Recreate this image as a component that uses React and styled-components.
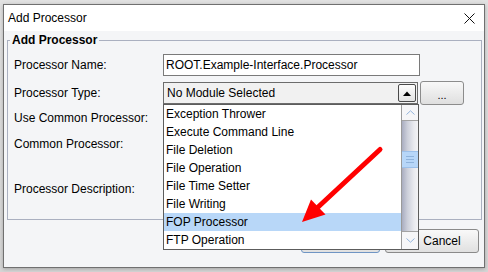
import React from "react";
import styled, { createGlobalStyle } from "styled-components";

const GlobalStyle = createGlobalStyle`
  html, body { margin: 0; padding: 0; }
  body {
    width: 488px;
    height: 272px;
    overflow: hidden;
    background: #dadada;
    font-family: "Liberation Sans", Arial, sans-serif;
    font-size: 12px;
    color: #000;
  }
`;

const Stage = styled.div`
  position: relative;
  width: 488px;
  height: 272px;
  box-sizing: border-box;
  padding: 4px 0 0 3px;
  background: linear-gradient(#e2e2e2, #d6d6d6);
`;

const Window = styled.div`
  width: 482px;
  height: 264px;
  box-sizing: border-box;
  border: 1px solid #707070;
  background: #f4f5f7;
  display: flex;
  flex-direction: column;
  box-shadow: 0 1px 4px rgba(0, 0, 0, 0.25);
`;

const TitleBar = styled.div`
  height: 26px;
  flex: none;
  background: #fff;
  display: flex;
  align-items: center;
  justify-content: space-between;
  padding: 0 9px 0 4px;
`;

const TitleText = styled.span`
  font-size: 12px;
  line-height: 14px;
`;

const Body = styled.div`
  flex: 1;
  display: flex;
  flex-direction: column;
  padding: 2px 2px 0 3px;
`;

const Group = styled.fieldset`
  margin: 0;
  padding: 7px 6px 0 6px;
  border: 1px solid #aab0c0;
  height: 187px;
  box-sizing: border-box;
  min-width: 0;
`;

const Legend = styled.legend`
  font-weight: bold;
  font-size: 12px;
  line-height: 14px;
  padding: 0 2px;
  margin-left: -4px;
`;

const Rows = styled.div`
  display: flex;
  flex-direction: column;
`;

const Row = styled.div`
  display: flex;
  align-items: ${(p) => p.$align || "center"};
  height: ${(p) => p.$h}px;
  margin-top: ${(p) => p.$mt || 0}px;
`;

const Label = styled.span`
  width: 149px;
  flex: none;
  line-height: 14px;
  padding-top: ${(p) => p.$pt || 0}px;
`;

const TextField = styled.input`
  width: 257px;
  height: 22px;
  box-sizing: border-box;
  border: 1px solid #7a7a7a;
  background: #fff;
  padding: 0 0 0 2px;
  margin: 0;
  font-family: inherit;
  font-size: 12px;
  color: #000;
  outline: none;
`;

const Combo = styled.div`
  position: relative;
  width: 255px;
  height: 22px;
  box-sizing: border-box;
  border: 1px solid #6c6c6c;
  background: #f1f1f1;
  display: flex;
  align-items: center;
  padding-left: 3px;
  z-index: 5;
`;

const ComboText = styled.span`
  flex: 1;
  line-height: 14px;
`;

const ArrowButton = styled.div`
  width: 18px;
  height: 18px;
  box-sizing: border-box;
  border: 1px solid #4a4a4a;
  border-radius: 2px;
  background: linear-gradient(#fdfdfd, #e3e3e3);
  margin-right: 1px;
  display: flex;
  align-items: center;
  justify-content: center;
`;

const SmallButton = styled.div`
  width: 44px;
  height: 24px;
  box-sizing: border-box;
  margin-left: 2px;
  border: 1px solid #8c8c8c;
  border-radius: 3px;
  background: linear-gradient(#f8f8f8, #dfdfdf);
  display: flex;
  align-items: center;
  justify-content: center;
  font-size: 11px;
  line-height: 12px;
  padding-top: 3px;
`;

const DropList = styled.div`
  position: absolute;
  top: calc(100% + 1px);
  left: -1px;
  width: 256px;
  box-sizing: border-box;
  border: 1px solid #5c5c5c;
  background: #fff;
  display: flex;
`;

const Items = styled.div`
  flex: 1;
  display: flex;
  flex-direction: column;
`;

const Item = styled.div`
  height: 18px;
  line-height: 18px;
  padding-left: 2px;
  background: ${(p) => (p.$selected ? "#b8d7f8" : "transparent")};
  white-space: nowrap;
`;

const ScrollBar = styled.div`
  width: 17px;
  flex: none;
  display: flex;
  flex-direction: column;
  border-left: 1px solid #9a9a9a;
  box-sizing: border-box;
`;

const ScrollBtn = styled.div`
  height: ${(p) => p.$h}px;
  flex: none;
  box-sizing: border-box;
  background: #f6f6f8;
  border-${(p) => p.$edge}: 1px solid #a3a3a3;
  display: flex;
  align-items: center;
  justify-content: center;
`;

const Track = styled.div`
  flex: 1;
  display: flex;
  flex-direction: column;
  padding-top: 30px;
  background: linear-gradient(90deg, #a9adc0 0%, #cdd0db 35%, #e9eaef 75%, #f3f3f5 100%);
`;

const Thumb = styled.div`
  height: 17px;
  box-sizing: border-box;
  background: #b7d6f8;
  border-top: 1px solid #9cc0ea;
  border-bottom: 1px solid #9cc0ea;
  display: flex;
  flex-direction: column;
  align-items: center;
  justify-content: center;
  gap: 2px;
`;

const Grip = styled.div`
  width: 8px;
  height: 1px;
  background: #8fb3dc;
`;

const OtherField = styled.div`
  width: 200px;
  height: ${(p) => p.$h}px;
  box-sizing: border-box;
  border: 1px solid #7a7a7a;
  background: #fff;
`;

const ButtonRow = styled.div`
  margin-top: 9px;
  padding-right: 3px;
  display: flex;
  justify-content: flex-end;
  gap: 5px;
`;

const Button = styled.div`
  width: ${(p) => p.$w}px;
  height: 24px;
  box-sizing: border-box;
  border: 1px solid ${(p) => (p.$default ? "#6f95c4" : "#8a8a8a")};
  border-radius: 3px;
  background: linear-gradient(#f9f9f9, #e0e0e0);
  display: flex;
  align-items: center;
  justify-content: center;
  gap: 4px;
  font-size: 12px;
  line-height: 14px;
`;

const Overlay = styled.svg`
  position: absolute;
  left: 0;
  top: 0;
  width: 488px;
  height: 272px;
  pointer-events: none;
  z-index: 20;
`;

const items = [
  "Exception Thrower",
  "Execute Command Line",
  "File Deletion",
  "File Operation",
  "File Time Setter",
  "File Writing",
  "FOP Processor",
  "FTP Operation",
];

export default function App() {
  return (
    <>
      <GlobalStyle />
      <Stage>
        <Window>
          <TitleBar>
            <TitleText>Add Processor</TitleText>
            <svg width="11" height="11" viewBox="0 0 11 11">
              <path d="M0.5 0.5 L10.5 10.5 M10.5 0.5 L0.5 10.5" stroke="#111" strokeWidth="1" />
            </svg>
          </TitleBar>
          <Body>
            <Group>
              <Legend>Add Processor</Legend>
              <Rows>
                <Row $h={22}>
                  <Label>Processor Name:</Label>
                  <TextField readOnly value="ROOT.Example-Interface.Processor" />
                </Row>
                <Row $h={22} $mt={6}>
                  <Label>Processor Type:</Label>
                  <Combo>
                    <ComboText>No Module Selected</ComboText>
                    <ArrowButton>
                      <svg width="8" height="5" viewBox="0 0 8 5">
                        <path d="M0 5 L4 0.5 L8 5 Z" fill="#000" />
                      </svg>
                    </ArrowButton>
                    <DropList>
                      <Items>
                        {items.map((t) => (
                          <Item key={t} $selected={t === "FOP Processor"}>
                            {t}
                          </Item>
                        ))}
                      </Items>
                      <ScrollBar>
                        <ScrollBtn $h={16} $edge="bottom">
                          <svg width="9" height="5" viewBox="0 0 9 5">
                            <path d="M0.5 4.5 L4.5 0.8 L8.5 4.5" stroke="#93b4dc" fill="none" strokeWidth="1" />
                          </svg>
                        </ScrollBtn>
                        <Track>
                          <Thumb>
                            <Grip />
                            <Grip />
                            <Grip />
                          </Thumb>
                        </Track>
                        <ScrollBtn $h={18} $edge="top">
                          <svg width="9" height="5" viewBox="0 0 9 5">
                            <path d="M0.5 0.5 L4.5 4.2 L8.5 0.5" stroke="#93b4dc" fill="none" strokeWidth="1" />
                          </svg>
                        </ScrollBtn>
                      </ScrollBar>
                    </DropList>
                  </Combo>
                  <SmallButton>...</SmallButton>
                </Row>
                <Row $h={27}>
                  <Label>Use Common Processor:</Label>
                  <OtherField $h={13} style={{ width: 13 }} />
                </Row>
                <Row $h={26}>
                  <Label>Common Processor:</Label>
                  <OtherField $h={22} />
                </Row>
                <Row $h={58} $align="flex-start">
                  <Label $pt={25}>Processor Description:</Label>
                  <OtherField $h={56} />
                </Row>
              </Rows>
            </Group>
            <ButtonRow>
              <Button $w={79} $default>
                <svg width="14" height="14" viewBox="0 0 14 14">
                  <path d="M2 7 L6 11 L12 3" stroke="#2e9a2e" strokeWidth="2" fill="none" />
                </svg>
                OK
              </Button>
              <Button $w={94}>
                <svg width="16" height="16" viewBox="0 0 16 16">
                  <circle cx="8" cy="8" r="6" fill="#d83b3b" />
                </svg>
                Cancel
              </Button>
            </ButtonRow>
          </Body>
        </Window>
        <Overlay viewBox="0 0 488 272">
          <line x1="380" y1="149.5" x2="316" y2="209" stroke="#ff0000" strokeWidth="5" strokeLinecap="round" />
          <polygon points="302,222 311,199.5 325.5,214.5" fill="#ff0000" />
        </Overlay>
      </Stage>
    </>
  );
}
